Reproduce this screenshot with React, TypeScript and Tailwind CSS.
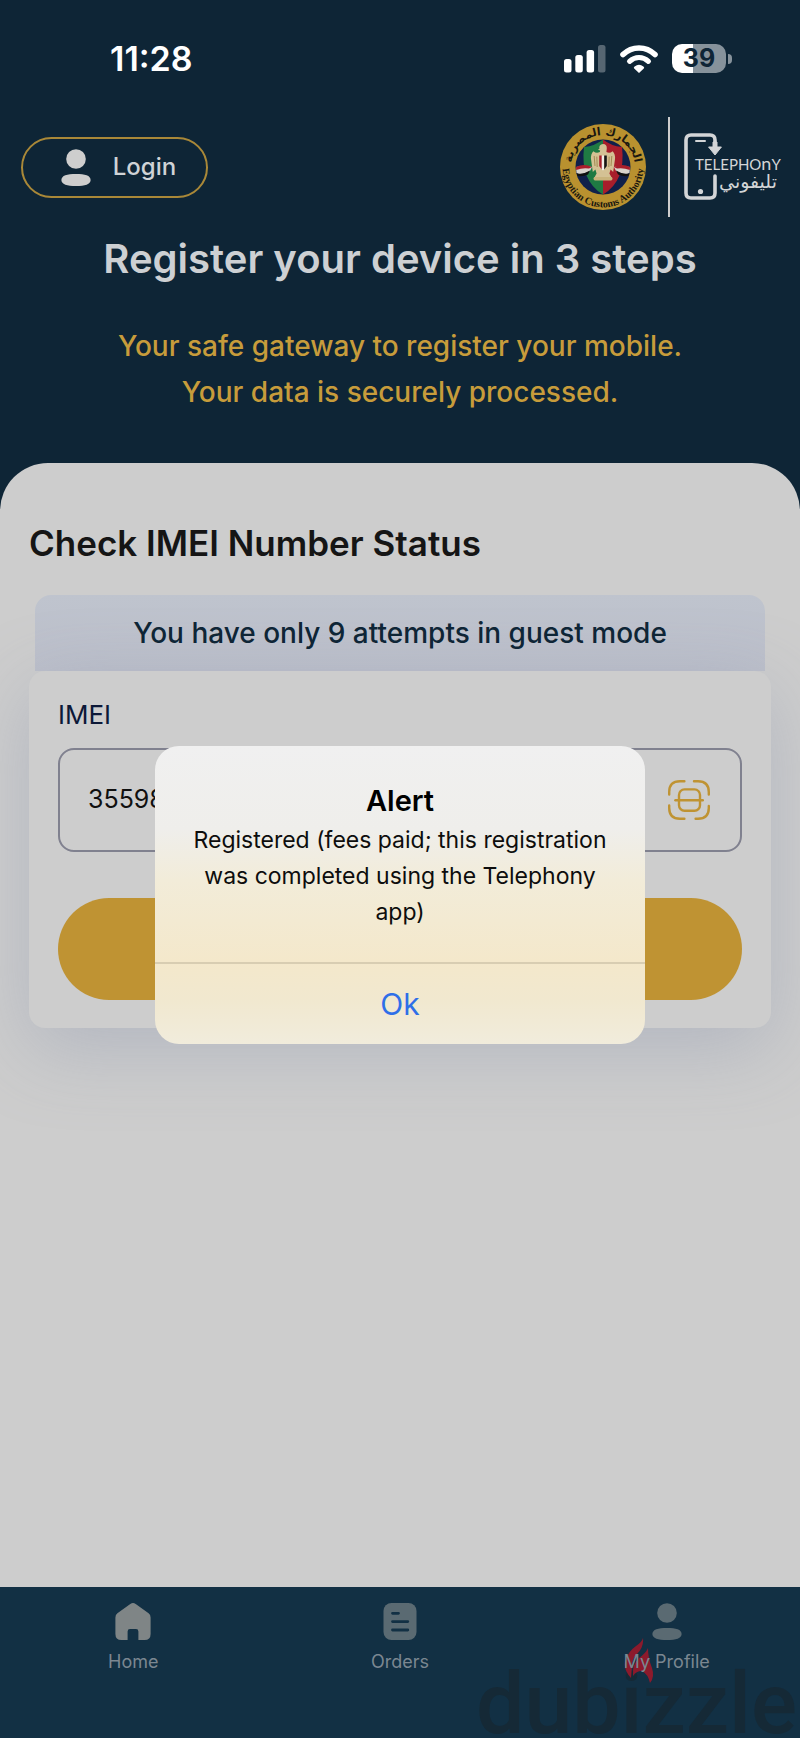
import type { ReactNode } from "react";

function SignalIcon() {
  return (
    <svg className="h-[28px] w-[42px]" viewBox="0 0 42 28" fill="white">
      <rect x="0" y="14" width="7.5" height="13.5" rx="2.5" />
      <rect x="11.3" y="10" width="7.5" height="17.5" rx="2.5" />
      <rect x="22.6" y="5" width="7.5" height="22.5" rx="2.5" />
      <rect x="34" y="0" width="7.5" height="27.5" rx="2.5" opacity="0.3" />
    </svg>
  );
}

function WifiIcon() {
  return (
    <svg className="h-[28px] w-[38px]" viewBox="0 0 38 28" fill="none">
      <path d="M3 9.6 C12 .8 26 .8 35 9.6" stroke="white" strokeWidth="5.6" strokeLinecap="round" />
      <path d="M9.6 16.3 C15 11.2 23 11.2 28.4 16.3" stroke="white" strokeWidth="5.2" strokeLinecap="round" />
      <path d="M19 28 L14.2 23.6 Q13.2 22.4 14.6 21.4 Q19 18.2 23.4 21.4 Q24.8 22.4 23.8 23.6 Z" fill="white" />
    </svg>
  );
}

function Battery() {
  return (
    <div className="flex items-center gap-[2px]">
      <div className="flex h-[29px] w-[54px] items-center justify-center rounded-[10px] bg-[linear-gradient(90deg,#fff_39%,#86929b_39%)] text-[25px] font-bold leading-none text-[#0e2536]">
        39
      </div>
      <div className="h-[10px] w-[4px] rounded-r-full bg-[#86929b]" />
    </div>
  );
}

function PersonIcon({ className }: { className: string }) {
  return (
    <svg className={className} viewBox="0 0 30 37" fill="currentColor">
      <circle cx="15" cy="10" r="9.8" />
      <path d="M15 25 C24 25 29.6 26.5 29.6 31 C29.6 35.4 24 37 15 37 C6 37 .4 35.4 .4 31 C.4 26.5 6 25 15 25 Z" />
    </svg>
  );
}

function HomeIcon({ className }: { className: string }) {
  return (
    <svg className={className} viewBox="0 0 36 37" fill="currentColor">
      <path d="M15.3 1 Q18 -.8 20.7 1 L33.6 10.2 Q35.6 11.8 35.6 14.4 V31 Q35.6 37 29.6 37 H23.4 V28.4 Q23.4 26 21 26 H15 Q12.6 26 12.6 28.4 V37 H6.4 Q.4 37 .4 31 V14.4 Q.4 11.8 2.4 10.2 Z" />
    </svg>
  );
}

function OrdersIcon({ className }: { className: string }) {
  return (
    <svg className={className} viewBox="0 0 34 37" fill="none">
      <rect x=".5" y="0" width="33" height="37" rx="8" fill="currentColor" />
      <path d="M9.5 10.3 H15.5 M9.5 18.6 H24.8 M9.5 27 H24.8" stroke="#123044" strokeWidth="2.8" strokeLinecap="round" />
    </svg>
  );
}

function ScanIcon() {
  return (
    <svg className="h-[40px] w-[42px]" viewBox="0 0 42 40" fill="none" stroke="#bf9333" strokeWidth="2.4" strokeLinecap="round">
      <path d="M1.2 14.6 V12 Q1.2 1.2 12 1.2 H16.4" />
      <path d="M26 1.2 H30 Q40.8 1.2 40.8 12 V14.6" />
      <path d="M1.2 25.4 V28 Q1.2 38.8 12 38.8 H16.4" />
      <path d="M27.6 38.8 H30 Q40.8 38.8 40.8 28 V26" />
      <rect x="11" y="9.4" width="21" height="21.4" rx="5.5" />
      <path d="M7.4 20.2 H34.8" />
    </svg>
  );
}

function CustomsSeal() {
  return (
    <svg className="h-[88px] w-[88px]" viewBox="0 0 88 88" role="img" aria-label="Egyptian Customs Authority">
      <defs>
        <path id="sealTop" d="M13 52 A32 32 0 1 1 75 52" />
        <path id="sealBottom" d="M4.6 35 A40.4 40.4 0 1 0 83.4 35" />
      </defs>
      <circle cx="44" cy="44" r="43" fill="#b9912f" />
      <circle cx="44" cy="44" r="27.5" fill="#10204a" />
      {/* shield */}
      <path d="M44 16.5 Q36 23 25 24 Q21 58 44 71.5 Z" fill="#1f7a43" />
      <path d="M44 16.5 Q52 23 63 24 Q67 58 44 71.5 Z" fill="#a81e2b" />
      {/* flag ribbons */}
      <path d="M17 44 Q27 42 33 44 L31 48 Q22 53 17.5 50 Z" fill="#d8d3cc" />
      <path d="M17 44 Q25 40 33 44 L30 45.6 Q24 44.5 17.2 47 Z" fill="#a81e2b" />
      <path d="M17.6 50.2 Q24 52 31 47.6 L29 51.5 Q24 54 18.6 53 Z" fill="#111" />
      <path d="M71 44 Q61 42 55 44 L57 48 Q66 53 70.5 50 Z" fill="#d8d3cc" />
      <path d="M71 44 Q63 40 55 44 L58 45.6 Q64 44.5 70.8 47 Z" fill="#a81e2b" />
      <path d="M70.4 50.2 Q64 52 57 47.6 L59 51.5 Q64 54 69.4 53 Z" fill="#111" />
      {/* eagle */}
      <path d="M40.4 26 Q39.6 21.4 44 21 Q48 21.2 47.8 25.4 L47.4 29 Q50.6 31 53.6 28.2 Q56.4 30.6 56 36 L54.2 49 L51.6 46.4 L50.4 50.6 L53.4 56 H34.6 L37.6 50.6 L36.4 46.4 L33.8 49 L32 36 Q31.6 30.6 34.4 28.2 Q37.4 31 40.8 29 L41.2 27.4 L38.8 26.8 Z" fill="#d4c194" />
      <path d="M35.2 33 L36 43 M37.8 33.6 L38.2 44 M52.8 33 L52 43 M50.2 33.6 L49.8 44" stroke="#9c844c" strokeWidth=".9" fill="none" />
      <path d="M40.2 32.4 H42.8 V46.4 L40.2 43 Z" fill="#a81e2b" />
      <path d="M42.8 32.4 H45.2 V46.4 L44 47.6 L42.8 46.4 Z" fill="#f2efe8" />
      <path d="M45.2 32.4 H47.8 V43 L45.2 46.4 Z" fill="#151515" />
      <rect x="34.6" y="54" width="18.8" height="3.4" rx="1.4" fill="#c9b37c" />
      <text fill="#1a1710" fontSize="11" fontWeight="700" fontFamily="'DejaVu Sans', sans-serif">
        <textPath href="#sealTop" startOffset="50%" textAnchor="middle">
          الجمارك المصرية
        </textPath>
      </text>
      <text fill="#1a1710" fontSize="10" fontWeight="700" fontFamily="'Liberation Serif', serif">
        <textPath href="#sealBottom" startOffset="50%" textAnchor="middle">
          Egyptian Customs Authority
        </textPath>
      </text>
    </svg>
  );
}

function TelephonyLogo() {
  return (
    <svg className="h-[68px] w-[96px] overflow-visible" viewBox="0 0 96 68" role="img" aria-label="Telephony">
      <g fill="none" stroke="#d3d5d7" strokeWidth="3.6" strokeLinecap="round" strokeLinejoin="round">
        <path d="M31 14 V7 Q31 2 26 2 H7 Q2 2 2 7 V60 Q2 65 7 65 H26 Q31 65 31 60 V43" />
        <path d="M12 8 H21" strokeWidth="2" />
      </g>
      <path d="M24.6 14 H29 V9 H33 V14 H37.4 L31 22 Z" fill="#d3d5d7" stroke="#d3d5d7" strokeLinejoin="round" />
      <circle cx="16.5" cy="58.5" r="2.6" fill="#d3d5d7" />
      <text x="11" y="37" fill="#d3d5d7" fontSize="15" fontFamily="Lato, sans-serif">
        TELEPHO<tspan fontSize="18">n</tspan>Y
      </text>
      <text x="64" y="55" textAnchor="middle" fill="#d3d5d7" fontSize="19" fontFamily="'DejaVu Sans', sans-serif">
        تليفوني
      </text>
    </svg>
  );
}

function Watermark() {
  return (
    <div className="pointer-events-none absolute right-0 bottom-0 h-[104px] w-[324px] overflow-hidden" aria-hidden="true">
      <div className="absolute bottom-0 left-0 font-[Roboto,sans-serif] text-[86px] font-medium leading-[68px] text-[#152936]">
        dubizzle
      </div>
      <svg className="absolute top-0 left-[147px] h-[50px] w-[32px]" viewBox="0 0 32 50" fill="#8c1a2c">
        <path d="M20 4 Q21 13 14 20 Q9 25 9 32 L8 44 Q-1 34 3 25 Q6 17 13 12 Q19 8 20 4 Z" />
        <path d="M25 14 Q25 24 29 34 Q32 43 27 49 Q25 40 19 37 Q13 37 10 42 Q9 30 16 24 Q23 19 25 14 Z" />
      </svg>
    </div>
  );
}

function NavItem({ label, children }: { label: string; children: ReactNode }) {
  return (
    <a href="#" className="flex flex-1 flex-col items-center gap-2">
      {children}
      <span className="text-[18px] leading-7 text-[#7b8791]">{label}</span>
    </a>
  );
}

export default function App() {
  return (
    <div className="relative flex min-h-screen flex-col bg-[#0e2536] font-[Inter,sans-serif]">
      {/* Status bar */}
      <div className="flex h-[117px] items-center justify-between pr-[68px] pl-[110px]">
        <span className="text-[34px] font-semibold text-white">11:28</span>
        <div className="flex items-center gap-[14px]">
          <SignalIcon />
          <WifiIcon />
          <Battery />
        </div>
      </div>

      {/* Header */}
      <header className="flex flex-col pb-12">
        <div className="flex h-[100px] items-center justify-between pr-[20px] pl-[21px]">
          <button
            type="button"
            className="flex h-[61px] w-[187px] items-center justify-center gap-[22px] rounded-full border-2 border-[#a98838] pl-2 text-[24px] font-medium text-[#cfd3d6]"
          >
            <PersonIcon className="h-[37px] w-[30px] text-[#cecece]" />
            Login
          </button>
          <div className="flex h-full items-center">
            <CustomsSeal />
            <div className="ml-[21px] h-full w-[2px] bg-[#cdcdcd]" />
            <div className="ml-[14px]">
              <TelephonyLogo />
            </div>
          </div>
        </div>
        <h1 className="mt-[18px] text-center text-[40px] font-semibold leading-[48px] text-[#cdd0d3]">
          Register your device in 3 steps
        </h1>
        <p className="mt-10 text-center text-[28px] font-medium leading-[46px] text-[#c79c3b]">
          Your safe gateway to register your mobile.
          <br />
          Your data is securely processed.
        </p>
      </header>

      {/* Content */}
      <main className="flex-1 rounded-t-[48px] bg-[#cdcdcd] px-[29px] pt-14">
        <h2 className="text-[35px] font-semibold leading-[48px] text-[#151515]">Check IMEI Number Status</h2>
        <div className="mt-7">
          <div className="mx-[6px] flex h-[76px] items-center justify-center rounded-t-2xl bg-linear-to-b from-[#bfc4ce] to-[#bcbfca] text-[28px] font-medium text-[#0e2536]">
            You have only 9 attempts in guest mode
          </div>
          <div className="rounded-2xl bg-[#cdcdcd] px-[29px] pt-6 pb-7 shadow-[0_20px_76px_rgba(140,150,175,0.42)]">
            <label htmlFor="imei" className="block text-[26px] leading-10 text-[#0c1838]">
              IMEI
            </label>
            <div className="mt-[13px] flex h-[104px] items-center rounded-2xl border-2 border-[#80818f] pr-[30px] pl-7">
              <input
                id="imei"
                type="text"
                defaultValue="35598"
                className="min-w-0 flex-1 bg-transparent text-[25px] text-[#101010] outline-none"
              />
              <button type="button" aria-label="Scan">
                <ScanIcon />
              </button>
            </div>
            <button type="button" aria-label="Check" className="mt-[46px] block h-[102px] w-full rounded-full bg-[#bf9333]" />
          </div>
        </div>
      </main>

      {/* Bottom navigation */}
      <nav className="relative bg-[#123044]">
        <Watermark />
        <div className="relative flex pt-4 pb-[62px]">
          <NavItem label="Home">
            <HomeIcon className="h-[37px] w-[36px] text-[#7f8586]" />
          </NavItem>
          <NavItem label="Orders">
            <OrdersIcon className="h-[37px] w-[34px] text-[#5a6a72]" />
          </NavItem>
          <NavItem label="My Profile">
            <PersonIcon className="h-[37px] w-[30px] text-[#5a6a72]" />
          </NavItem>
        </div>
      </nav>

      {/* Alert */}
      <div className="absolute inset-0 flex items-center justify-center pt-[52px]">
        <div
          role="alertdialog"
          aria-labelledby="alert-title"
          className="w-[490px] overflow-hidden rounded-3xl bg-[linear-gradient(180deg,#f0f0f0_0%,#efeeeb_28%,#f2ecd9_45%,#f4e8cb_72%,#f1e8cf_85%,#f1ecdc_100%)] text-center"
        >
          <div className="px-8 pt-9 pb-8">
            <h3 id="alert-title" className="text-[29px] font-semibold leading-[38px] text-black">
              Alert
            </h3>
            <p className="mt-[2px] text-[23px] leading-9 text-[#0d0d0d]">
              Registered (fees paid; this registration was completed using the Telephony app)
            </p>
          </div>
          <button type="button" className="h-[82px] w-full border-t-2 border-[#d8cdb2] text-[30px] text-[#2f6fe8]">
            Ok
          </button>
        </div>
      </div>
    </div>
  );
}
